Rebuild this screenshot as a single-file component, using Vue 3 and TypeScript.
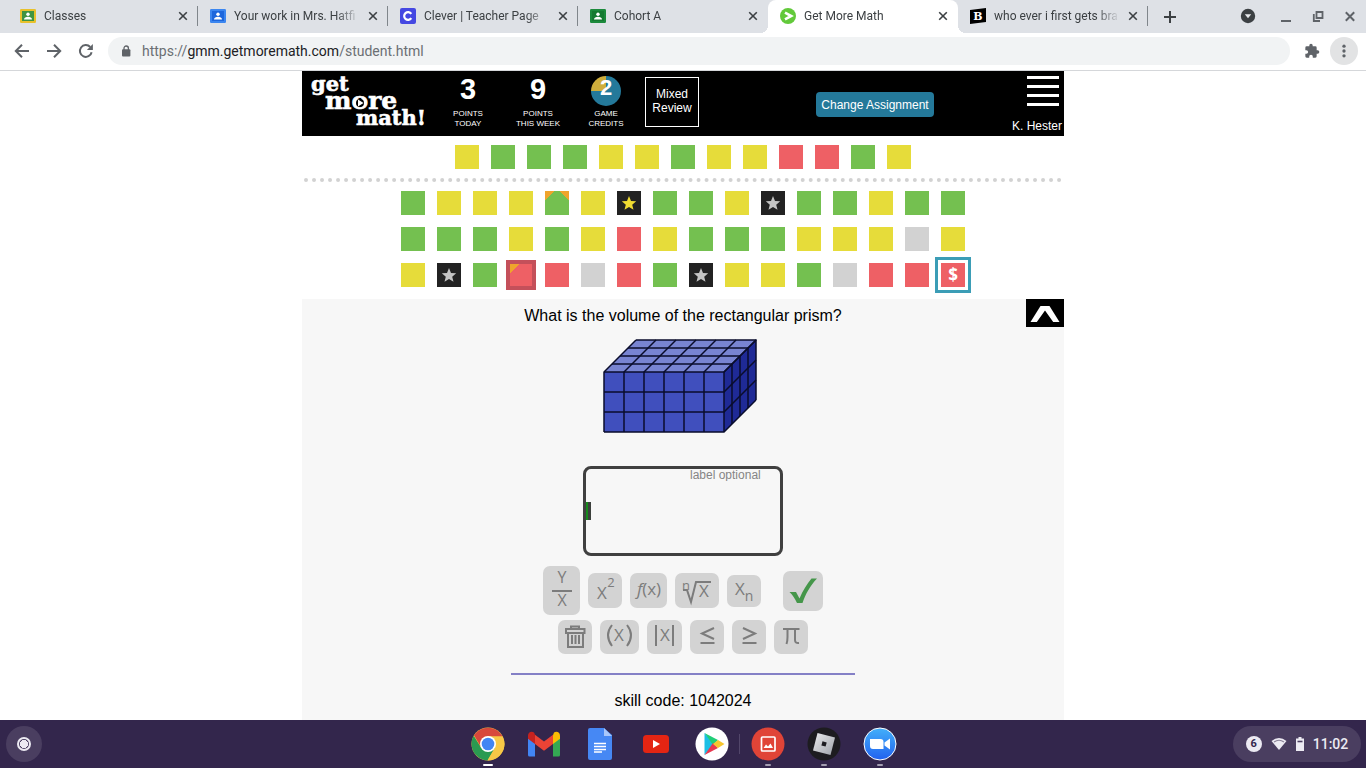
<script setup lang="ts">
import { ref } from 'vue'

interface Tab {
  title: string
  icon: 'class' | 'clever' | 'gmm' | 'brainly'
  frame?: string
  fill?: string
  active?: boolean
}

const tabs: Tab[] = [
  { title: 'Classes', icon: 'class', frame: '#e8c12c', fill: '#3f9442' },
  { title: 'Your work in Mrs. Hatfi', icon: 'class', frame: '#3b86f0', fill: '#1d66dc' },
  { title: 'Clever | Teacher Page', icon: 'clever' },
  { title: 'Cohort A', icon: 'class', frame: '#1c8a3c', fill: '#157a31' },
  { title: 'Get More Math', icon: 'gmm', active: true },
  { title: 'who ever i first gets bra', icon: 'brainly' },
]

type Mark = 'g' | 'y' | 'r' | 'n' | 'gold' | 'silver' | 'peak' | 'missed' | 'current'

const practiceRow: Mark[] = ['y', 'g', 'g', 'g', 'y', 'y', 'g', 'y', 'y', 'r', 'r', 'g', 'y']
const reviewRows: Mark[][] = [
  ['g', 'y', 'y', 'y', 'peak', 'y', 'gold', 'g', 'g', 'y', 'silver', 'g', 'g', 'y', 'g', 'g'],
  ['g', 'g', 'g', 'y', 'g', 'y', 'r', 'y', 'g', 'g', 'g', 'y', 'y', 'y', 'n', 'y'],
  ['y', 'silver', 'g', 'missed', 'r', 'n', 'r', 'g', 'silver', 'y', 'y', 'g', 'n', 'r', 'r', 'current'],
]

const range = (n: number): number[] => Array.from({ length: n }, (_, i) => i)

const unitLabel = ref('')
const address = 'https://gmm.getmoremath.com/student.html'
</script>

<template>
  <div class="desktop">
    <header class="tabbar">
      <div v-for="tab in tabs" :key="tab.title" class="tab" :class="{ active: tab.active }">
        <svg class="favicon" viewBox="0 0 16 16" aria-hidden="true">
          <template v-if="tab.icon === 'class'">
            <rect y="1" width="16" height="14" rx="1.2" :fill="tab.frame" />
            <rect x="2" y="3" width="12" height="10" :fill="tab.fill" />
            <circle cx="8" cy="6.3" r="1.7" fill="#fff" />
            <path d="M4 11.500c0-2 2-2.800 4-2.800s4 .8 4 2.800z" fill="#fff" />
          </template>
          <template v-else-if="tab.icon === 'clever'">
            <rect width="16" height="16" rx="2" fill="#4548e2" />
            <path d="M11.300 5.800A3.900 3.900 0 1 0 11.300 10.200" fill="none" stroke="#fff" stroke-width="2.200" />
          </template>
          <template v-else-if="tab.icon === 'gmm'">
            <circle cx="8" cy="8" r="8" fill="#62c93a" />
            <path d="M5 4.600L11.200 8 5 11.400" fill="none" stroke="#fff" stroke-width="2.600" />
          </template>
          <template v-else>
            <path d="M0 2L16 0V14L0 16z" fill="#000" />
            <text x="8" y="12" text-anchor="middle" class="slab-b">B</text>
          </template>
        </svg>
        <span class="tab-title">{{ tab.title }}</span>
        <button class="tab-close" type="button" aria-label="Close tab">
          <svg viewBox="0 0 10 10"><path d="M1.200 1.200L8.800 8.800M8.800 1.200L1.200 8.800" /></svg>
        </button>
      </div>
      <button class="new-tab" type="button" aria-label="New tab">
        <svg viewBox="0 0 12 12"><path d="M6 0V12M0 6H12" /></svg>
      </button>
      <div class="window-controls">
        <button type="button" aria-label="Search tabs">
          <svg viewBox="0 0 16 16"><circle cx="8" cy="8" r="7.200" fill="#3c4043" /><path d="M4.800 6.200H11.200L8 10.200z" fill="#e8eaed" /></svg>
        </button>
        <button type="button" aria-label="Minimize">
          <svg viewBox="0 0 16 16"><path d="M3 13H13" fill="none" stroke="#5f6368" stroke-width="2" /></svg>
        </button>
        <button type="button" aria-label="Restore">
          <svg viewBox="0 0 16 16" fill="none" stroke="#5f6368" stroke-width="1.800"><path d="M6.500 4H12.500V10H6.500zM3.800 6V13H10" /></svg>
        </button>
        <button type="button" aria-label="Close window">
          <svg viewBox="0 0 16 16" fill="none" stroke="#5f6368" stroke-width="2"><path d="M3.800 4.300L12.200 12.700M12.200 4.300L3.800 12.700" /></svg>
        </button>
      </div>
    </header>

    <nav class="toolbar">
      <button type="button" aria-label="Back">
        <svg viewBox="0 0 16 16"><path d="M15 8H2M8 1.800L1.800 8 8 14.200" /></svg>
      </button>
      <button type="button" aria-label="Forward">
        <svg viewBox="0 0 16 16"><path d="M1 8H14M8 1.800L14.200 8 8 14.200" /></svg>
      </button>
      <button type="button" aria-label="Reload">
        <svg viewBox="0 0 16 16"><path d="M13.600 9.200A5.900 5.900 0 1 1 12.200 4" /><path d="M14.900 1V7H8.900z" class="solid" /></svg>
      </button>
      <div class="omnibox">
        <svg viewBox="0 0 10 12" aria-hidden="true"><rect x="1" y="4.200" width="8.400" height="7.300" rx="1" fill="#5f6368" /><path d="M3 5V3.200a2.200 2.200 0 0 1 4.400 0V5" fill="none" stroke="#5f6368" stroke-width="1.300" /></svg>
        <a :href="address">https://<b>gmm.getmoremath.com</b>/student.html</a>
      </div>
      <button type="button" aria-label="Extensions">
        <svg viewBox="0 0 24 24"><path class="solid" d="M20.500 11H19V7a2 2 0 0 0-2-2h-4V3.500a2.500 2.500 0 0 0-5 0V5H4a2 2 0 0 0-2 2v3.800h1.500a2.700 2.700 0 0 1 0 5.400H2V20a2 2 0 0 0 2 2h3.800v-1.500a2.700 2.700 0 0 1 5.400 0V22H17a2 2 0 0 0 2-2v-4h1.500a2.500 2.500 0 0 0 0-5z" /></svg>
      </button>
      <button class="more" type="button" aria-label="More">
        <svg viewBox="0 0 16 16"><g class="solid"><circle cx="8" cy="2.500" r="1.900" /><circle cx="8" cy="8" r="1.900" /><circle cx="8" cy="13.500" r="1.900" /></g></svg>
      </button>
    </nav>

    <main class="page">
      <div class="sheet">
        <header class="masthead">
          <svg class="logo" viewBox="0 0 131 65" role="img" aria-label="Get More Math">
            <g class="logo-text">
              <text x="9" y="20" font-size="21">get</text>
              <text x="23" y="38" font-size="25">more</text>
              <text x="54" y="54" font-size="21">math!</text>
            </g>
            <circle cx="58" cy="32" r="4" fill="#000" />
            <path d="M56 28.500L61.500 32 56 35.500z" fill="#fff" />
          </svg>
          <div class="stat"><strong>3</strong><span>POINTS<br />TODAY</span></div>
          <div class="stat"><strong>9</strong><span>POINTS<br />THIS WEEK</span></div>
          <div class="stat credits"><strong class="pie">2</strong><span>GAME<br />CREDITS</span></div>
          <button class="mode" type="button">Mixed<br />Review</button>
          <button class="change" type="button">Change Assignment</button>
          <div class="account">
            <button type="button" aria-label="Menu"><i></i><i></i><i></i><i></i></button>
            <span>K. Hester</span>
          </div>
        </header>

        <section class="progress">
          <div class="marks">
            <i v-for="(mark, i) in practiceRow" :key="i" class="mark" :class="mark"></i>
          </div>
          <div class="dots"></div>
          <div v-for="(row, r) in reviewRows" :key="r" class="marks">
            <i v-for="(mark, i) in row" :key="i" class="mark" :class="mark">
              <svg v-if="mark === 'gold' || mark === 'silver'" viewBox="0 0 24 24">
                <path d="M12 5L14 9.900 19.200 10.300 15.200 13.700 16.500 18.800 12 16 7.500 18.800 8.800 13.700 4.800 10.300 10 9.900z" />
              </svg>
              <template v-else-if="mark === 'current'">$</template>
            </i>
          </div>
        </section>

        <section class="problem">
          <div class="prompt">
            <p>What is the volume of the rectangular prism?</p>
            <button type="button" aria-label="Collapse">
              <svg viewBox="0 0 38 28"><path d="M4.500 23L14.500 7H23.500L33.500 23H27.200L19 11.500 10.800 23z" fill="#fff" /></svg>
            </button>
          </div>

          <svg class="prism" viewBox="0 0 160 95" role="img" aria-label="Rectangular prism built from unit cubes">
            <path d="M1 33L33 1H153L121 33z" fill="#7884d2" />
            <path d="M1 33H121V93H1z" fill="#404fbd" />
            <path d="M121 33L153 1V61L121 93z" fill="#1f2a96" />
            <g stroke="#0a0d2c" stroke-width="1.500" fill="none">
              <path v-for="i in range(7)" :key="'c' + i" :d="`M${1 + i * 20} 93V33l32-32`" />
              <path v-for="i in range(4)" :key="'r' + i" :d="`M1 ${33 + i * 20}H121l32-32`" />
              <path v-for="i in range(4)" :key="'d' + i" :d="`M${9 + i * 8} ${25 - i * 8}h120v60`" />
            </g>
          </svg>

          <div class="answer">
            <input v-model="unitLabel" type="text" aria-label="Label" placeholder="label optional" />
            <span class="caret"></span>
          </div>

          <div class="keys upper">
            <button class="fraction" type="button" aria-label="Fraction">
              <svg width="37" height="49"><text x="19" y="17" font-size="16">Y</text><path d="M9 25H29" /><text x="19" y="40" font-size="16">X</text></svg>
            </button>
            <button class="narrow" type="button" aria-label="Exponent">
              <svg width="34" height="35"><text x="14" y="26" font-size="17">X</text><text x="23" y="14" font-size="13">2</text></svg>
            </button>
            <button class="middle" type="button" aria-label="Function">
              <svg width="37" height="35"><text x="19" y="22" font-size="17"><tspan font-style="italic">f</tspan>(x)</text></svg>
            </button>
            <button class="wide" type="button" aria-label="Root">
              <svg width="44" height="35"><text x="11" y="17" font-size="13">n</text><path d="M8 17H12L16 29 21 9H36" /><text x="29" y="24" font-size="17">X</text></svg>
            </button>
            <button class="subscript" type="button" aria-label="Subscript">
              <svg width="34" height="32"><text x="13" y="20" font-size="17">X</text><text x="22" y="26" font-size="14">n</text></svg>
            </button>
            <button class="submit" type="button" aria-label="Submit answer">
              <svg width="40" height="40"><path d="M6.500 21H13L16.500 27.500C20 19 24 13 28.500 7.500H34C27 15 22.500 23 19.500 32H14C12 28 10 24 6.500 21z" /></svg>
            </button>
          </div>

          <div class="keys">
            <button class="narrow" type="button" aria-label="Clear">
              <svg width="34" height="34"><path d="M13 9V6.500H21V9M8 9H26.500V13H8zM10 13V27H25V13M14 15V24M17.500 15V24M21 15V24" /></svg>
            </button>
            <button class="paren" type="button" aria-label="Parentheses">
              <svg width="39" height="34"><text x="19" y="21" font-size="17">X</text><path d="M12 5Q4 15 12 26M27 5Q35 15 27 26" /></svg>
            </button>
            <button class="absolute" type="button" aria-label="Absolute value">
              <svg width="35" height="34"><path d="M9 5V26M26 5V26" /><text x="18" y="21" font-size="17">X</text></svg>
            </button>
            <button class="narrow" type="button" aria-label="Less than or equal">
              <svg width="34" height="34"><path d="M24 8L12 13.500 24 19M10.500 23H24.500" /></svg>
            </button>
            <button class="narrow" type="button" aria-label="Greater than or equal">
              <svg width="34" height="34"><path d="M11 8L23 13.500 11 19M10.500 23H24.500" /></svg>
            </button>
            <button class="narrow" type="button" aria-label="Pi">
              <svg width="34" height="34"><path d="M9 9H25.500M13.500 9V17Q13.500 21 12.500 24M21 9V20Q21 23.500 25 23" /></svg>
            </button>
          </div>

          <hr />
          <p class="skill">skill code: 1042024</p>
        </section>
      </div>
    </main>

    <footer class="shelf">
      <button class="launcher" type="button" aria-label="Launcher"><i></i></button>
      <div class="apps">
        <button class="app focus" type="button" aria-label="Chrome">
          <svg viewBox="0 0 34 34">
            <circle cx="17" cy="17" r="16.500" fill="#f7c846" />
            <path d="M2.700 8.800A16.500 16.500 0 0 0 16.500 33.500L24 20.500 17 17 10 20.500z" fill="#2a9a51" />
            <path d="M17 9.500H31.600L31 8.500A16.500 16.500 0 0 0 3 8.300L10 20z" fill="#d8483c" />
            <path d="M24 21L16.500 33.500A16.500 16.500 0 0 0 31.700 9.500H17z" fill="#f7c846" />
            <circle cx="17" cy="17" r="8" fill="#fff" /><circle cx="17" cy="17" r="6.300" fill="#4285f4" />
          </svg>
        </button>
        <button class="app" type="button" aria-label="Gmail">
          <svg viewBox="0 0 34 34">
            <path d="M1 9V28a1.500 1.500 0 0 0 1.500 1.500H8V13z" fill="#4285f4" />
            <path d="M26 13V29.500h5.500A1.500 1.500 0 0 0 33 28V9z" fill="#34a853" />
            <path d="M26 8.200V17l7-5.200V8.500c0-3.300-3.500-5-6-3z" fill="#fbbc04" />
            <path d="M8 17V7.800L17 14.500 26 7.800V17L17 23.800z" fill="#ea4335" />
            <path d="M1 8.500V11.800L8 17V7.800L7 5.500C4.500 3.500 1 5.200 1 8.500z" fill="#c5221f" />
          </svg>
        </button>
        <button class="app" type="button" aria-label="Docs">
          <svg viewBox="0 0 34 34">
            <path d="M7 1H21L29 8V31a2 2 0 0 1-2 2H7a2 2 0 0 1-2-2V3a2 2 0 0 1 2-2z" fill="#4688f4" />
            <path d="M21 1L29 9H21z" fill="#a8c7fa" />
            <path d="M11 16.500H23M11 19.500H23M11 22.500H23M11 25H19" stroke="#fff" stroke-width="1.500" />
          </svg>
        </button>
        <button class="app" type="button" aria-label="YouTube">
          <svg viewBox="0 0 34 34"><rect x="4" y="8" width="26" height="18" rx="3.500" fill="#e42513" /><path d="M14 13L21 17 14 21z" fill="#fff" /></svg>
        </button>
        <button class="app" type="button" aria-label="Play Store">
          <svg viewBox="0 0 34 34">
            <circle cx="17" cy="17" r="16.500" fill="#fff" />
            <path d="M9.500 6L19 17 9.500 28z" fill="#1cbfe5" />
            <path d="M9.500 6L23 13 18 18z" fill="#20ce78" />
            <path d="M9.500 28L23 21 18 16z" fill="#e8384f" />
            <path d="M23 13L29.500 17 23 21 18 17z" fill="#f7c62f" />
          </svg>
        </button>
        <button class="app open divided" type="button" aria-label="Gallery">
          <svg viewBox="0 0 34 34">
            <circle cx="17" cy="17" r="16.500" fill="#e04437" />
            <rect x="10.500" y="10" width="13.500" height="14" rx="1" fill="none" stroke="#fff" stroke-width="1.700" />
            <path d="M12.500 21L15 17.500 17 19.500 19.500 16.500 22 21z" fill="#fff" />
          </svg>
        </button>
        <button class="app open" type="button" aria-label="Roblox">
          <svg viewBox="0 0 34 34">
            <defs><linearGradient id="tile-steel" x2="1" y2="1"><stop stop-color="#ececee" /><stop offset="1" stop-color="#9fa3aa" /></linearGradient></defs>
            <circle cx="17" cy="17" r="16.500" fill="#1d1c20" />
            <path d="M10.500 6L28 10.500 23.500 28 6 23.500z" fill="url(#tile-steel)" /><path d="M15.500 14.300L19.700 15.400 18.600 19.600 14.400 18.500z" fill="#1d1c20" />
          </svg>
        </button>
        <button class="app open" type="button" aria-label="Zoom">
          <svg viewBox="0 0 34 34">
            <defs><linearGradient id="zoom-blue" x2="0" y2="1"><stop stop-color="#43b0fa" /><stop offset="1" stop-color="#2161ef" /></linearGradient></defs>
            <circle cx="17" cy="17" r="16" fill="url(#zoom-blue)" stroke="#fff" />
            <path d="M7 12H17.500a3 3 0 0 1 3 3V22H10a3 3 0 0 1-3-3zM21.500 15.500L27 11.500V22.500L21.500 18.500z" fill="#fff" />
          </svg>
        </button>
      </div>
      <button class="status" type="button">
        <span class="badge">6</span>
        <svg width="16" height="14" viewBox="0 0 16 14"><path d="M.5 4Q8-2 15.500 4L8 13z" fill="#eceaf2" /><path d="M3 5Q8 1.500 13 5" fill="none" stroke="#8a8298" stroke-width="1.200" /></svg>
        <svg width="8" height="14" viewBox="0 0 8 14"><path d="M2.500 0H5.500V1.500H8V14H0V1.500H2.500z" fill="#eceaf2" /><path d="M1.500 4.500H6.500" stroke="#4a3e60" stroke-width="1.600" /></svg>
        <span>11:02</span>
      </button>
    </footer>
  </div>
</template>

<style>
body {
  margin: 0;
}
</style>

<style scoped>
* {
  box-sizing: border-box;
}

.desktop {
  display: flex;
  flex-direction: column;
  min-height: 100vh;
  background: #fff;
  font-family: "Liberation Sans", Arial, sans-serif;
}

button {
  margin: 0;
  padding: 0;
  border: 0;
  background: none;
  font: inherit;
  color: inherit;
}

svg {
  display: block;
}

p {
  margin: 0;
}

/* Browser tabs */
.tabbar {
  display: flex;
  height: 33px;
  padding-left: 8px;
  background: #dee1e6;
  font-family: Roboto, sans-serif;
  font-size: 12px;
  color: #3c4043;
}

.tab {
  position: relative;
  display: flex;
  flex: 0 1 190px;
  align-items: center;
  gap: 8px;
  min-width: 0;
  padding: 0 10px 1px 12px;
}

.tab::after {
  content: "";
  position: absolute;
  right: 0;
  top: 6px;
  width: 1px;
  height: 20px;
  background: #80868b;
}

.tab.active {
  background: #fff;
  border-radius: 8px 8px 0 0;
}

.tab.active::before,
.tab.active::after {
  content: "";
  position: absolute;
  top: auto;
  bottom: 0;
  width: 8px;
  height: 8px;
}

.tab.active::before {
  left: -8px;
  background: radial-gradient(circle at 0 0, #dee1e6 8px, #fff 8px);
}

.tab.active::after {
  right: -8px;
  background: radial-gradient(circle at 100% 0, #dee1e6 8px, #fff 8px);
}

.tab:has(+ .active)::after {
  display: none;
}

.favicon {
  flex: none;
  width: 16px;
  height: 16px;
}

.slab-b {
  font-family: "DejaVu Serif", serif;
  font-size: 11px;
  font-weight: 700;
  fill: #fff;
}

.tab-title {
  flex: 1;
  overflow: hidden;
  white-space: nowrap;
  -webkit-mask-image: linear-gradient(to left, transparent, #000 24px);
  mask-image: linear-gradient(to left, transparent, #000 24px);
}

.tab-close svg {
  width: 10px;
  height: 10px;
  fill: none;
  stroke: #3c4043;
  stroke-width: 1.6;
}

.new-tab {
  margin-left: 16px;
}

.new-tab svg {
  width: 12px;
  height: 12px;
  stroke: #3c4043;
  stroke-width: 2;
}

.window-controls {
  display: flex;
  gap: 16px;
  align-items: center;
  margin-left: auto;
  padding: 0 8px 1px 0;
}

.window-controls button:first-child {
  margin-right: 6px;
}

.window-controls svg {
  width: 16px;
  height: 16px;
}

/* Address bar */
.toolbar {
  display: flex;
  align-items: center;
  gap: 16px;
  height: 38px;
  padding: 0 8px 1px 14px;
  border-bottom: 1px solid #d5d7da;
}

.toolbar button svg {
  width: 16px;
  height: 16px;
  fill: none;
  stroke: #5f6368;
  stroke-width: 2;
}

.toolbar .solid {
  fill: #5f6368;
  stroke: none;
}

.omnibox {
  display: flex;
  flex: 1;
  align-items: center;
  gap: 11px;
  height: 28px;
  margin: 0 -2px;
  padding: 0 13px;
  border-radius: 14px;
  background: #f1f3f4;
}

.omnibox svg {
  width: 10px;
  height: 12px;
}

.omnibox a {
  font: 14px/20px Roboto, sans-serif;
  color: #6b6f73;
  text-decoration: none;
}

.omnibox b {
  font-weight: 400;
  color: #202124;
}

.toolbar .more {
  display: grid;
  place-items: center;
  width: 28px;
  height: 28px;
  margin-left: -6px;
  border-radius: 50%;
  background: #e2e3e4;
}

.toolbar .more svg {
  width: 14px;
  height: 14px;
}

/* Site */
.page {
  display: flex;
  flex: 1;
  justify-content: center;
}

.sheet {
  display: flex;
  flex-direction: column;
  width: 100%;
  max-width: 762px;
}

.masthead {
  display: flex;
  align-items: flex-start;
  height: 65px;
  background: #000;
  color: #fff;
}

.logo {
  flex: none;
  width: 131px;
  height: 65px;
}

.logo-text {
  font-family: "DejaVu Serif", serif;
  font-weight: 700;
  fill: #fff;
  stroke: #fff;
  stroke-width: 0.6;
}

.stat {
  width: 70px;
  padding-top: 4px;
  text-align: center;
}

.stat strong {
  display: block;
  height: 34px;
  font-size: 29px;
  line-height: 28px;
}

.stat span {
  display: block;
  font-size: 8px;
  line-height: 10px;
}

.credits {
  width: 66px;
}

.credits .pie {
  width: 30px;
  height: 30px;
  margin: 1px auto 3px;
  border-radius: 50%;
  background: conic-gradient(#24799a 75%, #cfae3c 0);
  font-size: 22px;
  line-height: 24px;
}

.mode {
  width: 54px;
  height: 50px;
  margin: 6px 0 0 6px;
  padding-bottom: 2px;
  border: 1px solid #fff;
  font-size: 12px;
  line-height: 14px;
}

.change {
  width: 118px;
  height: 25px;
  margin: 21px 76px 0 auto;
  border-radius: 4px;
  background: #24799a;
  font-size: 12px;
  white-space: nowrap;
}

.account {
  display: flex;
  flex-direction: column;
  align-items: flex-end;
  width: 54px;
  padding: 5px 2px 0 0;
  font-size: 12px;
  line-height: 14px;
  white-space: nowrap;
}

.account button {
  display: grid;
  gap: 6px;
  width: 32px;
  margin: 0 3px 13px 0;
}

.account i {
  height: 3px;
  background: #fff;
}

.progress {
  padding: 9px 0 12px;
}

.marks {
  display: flex;
  justify-content: center;
  gap: 12px;
}

.marks + .marks {
  margin-top: 12px;
}

.dots {
  margin: 9px 2px;
  border-top: 4px dotted #d2d2d2;
}

.mark {
  width: 24px;
  height: 24px;
}

.g { background: #74c050; }
.y { background: #e6dc3a; }
.r { background: #ee6065; }
.n { background: #d2d2d2; }
.gold, .silver { background: #222; }
.gold svg { fill: #f0dc32; }
.silver svg { fill: #c4c4c4; }

.peak {
  background:
    linear-gradient(135deg, #efa42c 7px, transparent 7px),
    linear-gradient(225deg, #efa42c 7px, transparent 7px),
    #74c050;
}

.missed {
  background: linear-gradient(135deg, #efa42c 8px, #ee6065 8px);
  box-shadow: 0 0 0 3px #c4505a, inset 0 0 0 1px #c4505a;
}

.current {
  outline: 3px solid #3b9db6;
  outline-offset: 3px;
  background: #ee6065;
  color: #fff;
  font: 700 17px/24px "Noto Sans", sans-serif;
  text-align: center;
}

.problem {
  display: flex;
  flex: 1;
  flex-direction: column;
  align-items: center;
  background: #f7f7f7;
  font-size: 16px;
  line-height: 34px;
}

.prompt {
  display: grid;
  grid-template-columns: 1fr auto 1fr;
  width: 100%;
  height: 32px;
}

.prompt p {
  grid-column: 2;
}

.prompt button {
  justify-self: end;
  width: 38px;
  height: 28px;
  background: #000;
}

.prism {
  width: 160px;
  height: 95px;
  margin-top: 8px;
}

.answer {
  width: 200px;
  height: 90px;
  margin-top: 32px;
  border: 3px solid #404040;
  border-radius: 8px;
}

.answer input {
  display: block;
  width: 76px;
  height: 12px;
  margin: 0 14px 0 auto;
  padding: 0;
  border: 0;
  outline: 0;
  background: none;
  font: 12px/12px "Liberation Sans", sans-serif;
}

.answer input::placeholder {
  color: #858585;
  opacity: 1;
}

.caret {
  display: block;
  width: 5px;
  height: 18px;
  margin-top: 21px;
  border-left: 2px solid #168a1c;
  background: #3c403c;
}

.keys {
  display: flex;
  align-items: center;
  gap: 8px;
  margin-top: 5px;
}

.keys.upper {
  margin-top: 10px;
}

.keys button {
  height: 34px;
  border-radius: 7px;
  background: #d3d3d3;
}

.keys svg {
  fill: none;
  stroke: #7c7c7c;
  stroke-width: 2;
}

.keys text {
  font-family: "Open Sans", "Noto Sans", sans-serif;
  text-anchor: middle;
  fill: #7c7c7c;
  stroke: none;
}

.keys .narrow { width: 34px; }
.keys .middle { width: 37px; }
.keys .wide { width: 44px; }
.keys .paren { width: 39px; }
.keys .absolute { width: 35px; }
.keys.upper .narrow,
.keys .middle,
.keys .wide { height: 35px; }
.keys .fraction { width: 37px; height: 49px; }
.keys .subscript { width: 34px; height: 32px; }
.keys .submit { width: 40px; height: 40px; margin-left: 14px; }
.keys .submit path { fill: #45964a; stroke: none; }

hr {
  width: 344px;
  height: 2px;
  margin: 19px 0 9px;
  border: 0;
  background: #8480c6;
}

/* Shelf */
.shelf {
  display: grid;
  grid-template-columns: 1fr auto 1fr;
  align-items: center;
  height: 48px;
  padding: 0 5px 0 6px;
  background: #33264c;
  font-family: Roboto, sans-serif;
}

.launcher {
  display: grid;
  place-items: center;
  width: 36px;
  height: 36px;
  border-radius: 50%;
  background: #4a3e60;
}

.launcher i {
  width: 14px;
  height: 14px;
  border: 2px solid #eceaf2;
  border-radius: 50%;
  background: radial-gradient(circle, #eceaf2 4px, transparent 4px);
}

.apps {
  display: flex;
  gap: 22px;
}

.app {
  position: relative;
  width: 34px;
}

.app.open::after,
.app.focus::after {
  content: "";
  position: absolute;
  bottom: -5px;
  left: 14px;
  width: 6px;
  height: 2px;
  border-radius: 1px;
  background: #a59fb2;
}

.app.focus::after {
  left: 12px;
  width: 10px;
  background: #fff;
}

.divided::before {
  content: "";
  position: absolute;
  left: -12px;
  top: 7px;
  width: 1px;
  height: 20px;
  background: #52466a;
}

.status {
  display: flex;
  align-items: center;
  justify-content: center;
  justify-self: end;
  gap: 9px;
  width: 128px;
  height: 36px;
  border-radius: 18px;
  background: #4a3e60;
  color: #eceaf2;
  font-size: 14px;
  font-weight: 500;
}

.badge {
  width: 16px;
  height: 16px;
  border-radius: 50%;
  background: #eceaf2;
  color: #33264c;
  font-size: 11px;
  font-weight: 700;
  line-height: 16px;
  text-align: center;
}
</style>
